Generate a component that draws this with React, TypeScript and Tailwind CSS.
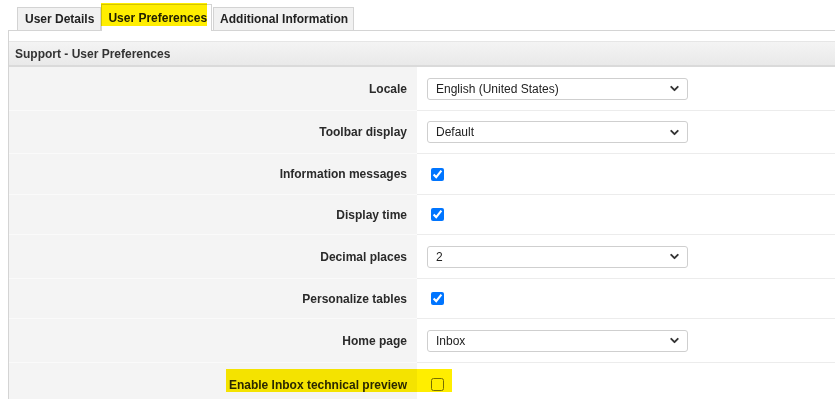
import { ChevronDown } from "lucide-react"

type Row = {
  label: string
  h: string
  select?: string
  checked?: boolean
}

const rows: Row[] = [
  { label: "Locale", h: "h-[44px]", select: "English (United States)" },
  { label: "Toolbar display", h: "h-[43px]", select: "Default" },
  { label: "Information messages", h: "h-[41px]", checked: true },
  { label: "Display time", h: "h-[40px]", checked: true },
  { label: "Decimal places", h: "h-[44px]", select: "2" },
  { label: "Personalize tables", h: "h-[40px]", checked: true },
  { label: "Home page", h: "h-[44px]", select: "Inbox" },
  { label: "Enable Inbox technical preview", h: "h-[44px]", checked: false },
]

function FakeSelect({ value }: { value: string }) {
  return (
    <div className="flex h-[22px] w-[261px] items-center justify-between rounded-[3px] border border-[#cfcfcf] bg-white pl-[8px] pr-[6px] font-normal text-[#222]">
      <span>{value}</span>
      <ChevronDown size={13} strokeWidth={3.5} className="text-[#333]" />
    </div>
  )
}

export default function App() {
  return (
    <div className="relative h-[399px] w-[835px] overflow-hidden bg-white font-['Liberation_Sans',Arial,sans-serif] text-[12px] text-[#333]">
      {/* tabs */}
      <div className="relative z-10 flex items-end pl-[17px] pt-[4px] font-bold text-[#222]">
        <div className="flex h-[23px] items-center border border-b-0 border-[#d3d3d3] bg-[#f1f1f1] pl-[7px] pr-[6px]">
          User Details
        </div>
        <div className="-mb-px flex h-[27px] items-center border border-b-0 border-[#d3d3d3] bg-white pl-[6px] pr-[4px] pb-[1px]">
          User Preferences
        </div>
        <div className="ml-[1px] flex h-[23px] items-center border border-b-0 border-[#d3d3d3] bg-[#f1f1f1] pl-[6px] pr-[5px]">
          Additional Information
        </div>
      </div>

      {/* panel */}
      <div className="ml-[8px] border-l border-t border-[#d4d4d4] pt-[10px]">
        <div className="flex h-[26px] items-center border-t border-b-2 border-t-[#e6e6e6] border-b-[#dadada] bg-gradient-to-b from-[#f4f4f4] to-[#e9e9e9] pl-[6px] font-bold text-[#333]">
          Support - User Preferences
        </div>
        {rows.map((row) => (
          <div key={row.label} className={`flex ${row.h}`}>
            <div className="flex w-[408px] items-center justify-end border-b border-[#fafafa] bg-[#f4f4f4] pr-[10px] font-bold text-[#2a2a2a]">
              {row.label}
            </div>
            <div className="flex flex-1 items-center border-b border-[#ececec] bg-white pl-[10px]">
              {row.select !== undefined ? (
                <FakeSelect value={row.select} />
              ) : (
                <input type="checkbox" checked={row.checked} readOnly className="m-0 ml-[4px] h-[13px] w-[13px]" />
              )}
            </div>
          </div>
        ))}
      </div>

      {/* highlighter marks */}
      <div className="pointer-events-none absolute left-[101px] top-[3px] z-20 h-[23px] w-[106px] bg-[#ffee00] mix-blend-multiply" />
      <div className="pointer-events-none absolute left-[226px] top-[369px] z-20 h-[23px] w-[226px] bg-[#ffee00] mix-blend-multiply" />
    </div>
  )
}
